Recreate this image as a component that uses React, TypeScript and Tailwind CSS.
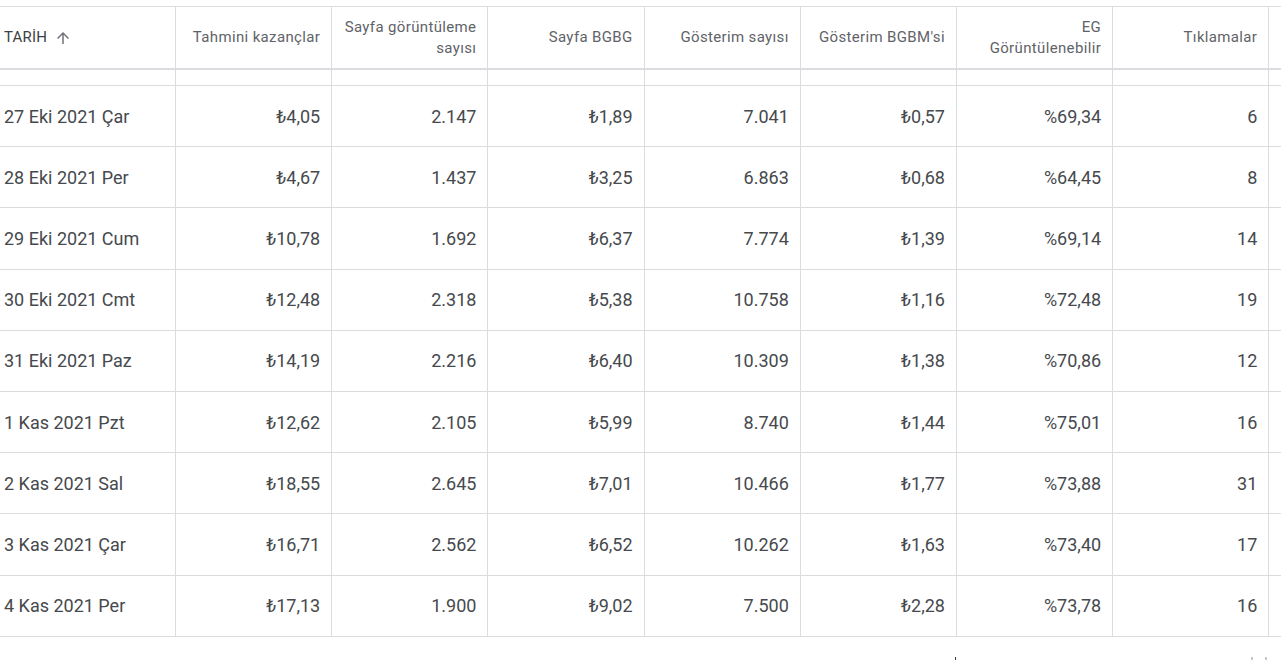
import React from "react";

const rows: string[][] = [
  ["27 Eki 2021 Çar", "₺4,05", "2.147", "₺1,89", "7.041", "₺0,57", "%69,34", "6"],
  ["28 Eki 2021 Per", "₺4,67", "1.437", "₺3,25", "6.863", "₺0,68", "%64,45", "8"],
  ["29 Eki 2021 Cum", "₺10,78", "1.692", "₺6,37", "7.774", "₺1,39", "%69,14", "14"],
  ["30 Eki 2021 Cmt", "₺12,48", "2.318", "₺5,38", "10.758", "₺1,16", "%72,48", "19"],
  ["31 Eki 2021 Paz", "₺14,19", "2.216", "₺6,40", "10.309", "₺1,38", "%70,86", "12"],
  ["1 Kas 2021 Pzt", "₺12,62", "2.105", "₺5,99", "8.740", "₺1,44", "%75,01", "16"],
  ["2 Kas 2021 Sal", "₺18,55", "2.645", "₺7,01", "10.466", "₺1,77", "%73,88", "31"],
  ["3 Kas 2021 Çar", "₺16,71", "2.562", "₺6,52", "10.262", "₺1,63", "%73,40", "17"],
  ["4 Kas 2021 Per", "₺17,13", "1.900", "₺9,02", "7.500", "₺2,28", "%73,78", "16"],
];

const headers: React.ReactNode[] = [
  "Tahmini kazançlar",
  <>Sayfa görüntüleme<br />sayısı</>,
  "Sayfa BGBG",
  "Gösterim sayısı",
  "Gösterim BGBM'si",
  <>EG<br />Görüntülenebilir</>,
  "Tıklamalar",
];

const grid = "grid grid-cols-[176px_repeat(8,156.2px)]";

export default function App() {
  return (
    <div className="w-[1281px] h-[660px] overflow-hidden bg-white font-[Roboto,sans-serif]">
      <div className="w-[1426px] pt-[6px]">
        {/* header */}
        <div className={`${grid} h-[64px] border-t border-b-2 border-t-[#dadce0] border-b-[#dadce0]`}>
          <div className="flex items-center pl-[4px] border-r border-[#dadce0]">
            <span className="text-[15px] text-[#3c4043] tracking-[0.2px]">TARİH</span>
            <svg className="ml-[7px]" width="18" height="18" viewBox="0 0 24 24" fill="#6f7378">
              <path d="M4 12l1.41 1.41L11 7.83V20h2V7.83l5.58 5.59L20 12l-8-8-8 8z" />
            </svg>
          </div>
          {headers.map((h, i) => (
            <div
              key={i}
              className="flex items-center justify-end text-right pr-[11px] border-r border-[#dadce0] text-[15px] leading-[21px] tracking-[0.35px] text-[#5f6368]"
            >
              <span>{h}</span>
            </div>
          ))}
          <div />
        </div>
        {/* spacer row */}
        <div className={`${grid} h-[16px] border-b border-[#dadce0]`}>
          {Array.from({ length: 8 }).map((_, i) => (
            <div key={i} className="border-r border-[#dadce0]" />
          ))}
          <div />
        </div>
        {rows.map((r, ri) => (
          <div key={ri} className={`${grid} h-[61.2px] border-b border-[#dadce0]`}>
            {r.map((c, ci) => (
              <div
                key={ci}
                className={`flex items-center border-r border-[#dadce0] text-[18px] text-[#46494d] ${
                  ci === 0 ? "pl-[4px]" : "justify-end pr-[11px]"
                }`}
              >
                {c}
              </div>
            ))}
            <div />
          </div>
        ))}
        {/* footer (cut off) */}
        <div className="flex items-start pt-[20px]">
          <div className="w-[955px]" />
          <div className="w-[1px] h-[3px] bg-[#3c4043]" />
          <div className="w-[295px]" />
          <div className="w-[2px] h-[3px] bg-[#c4c7c5]" />
          <div className="w-[12px]" />
          <div className="w-[2px] h-[3px] bg-[#c4c7c5]" />
        </div>
      </div>
    </div>
  );
}
